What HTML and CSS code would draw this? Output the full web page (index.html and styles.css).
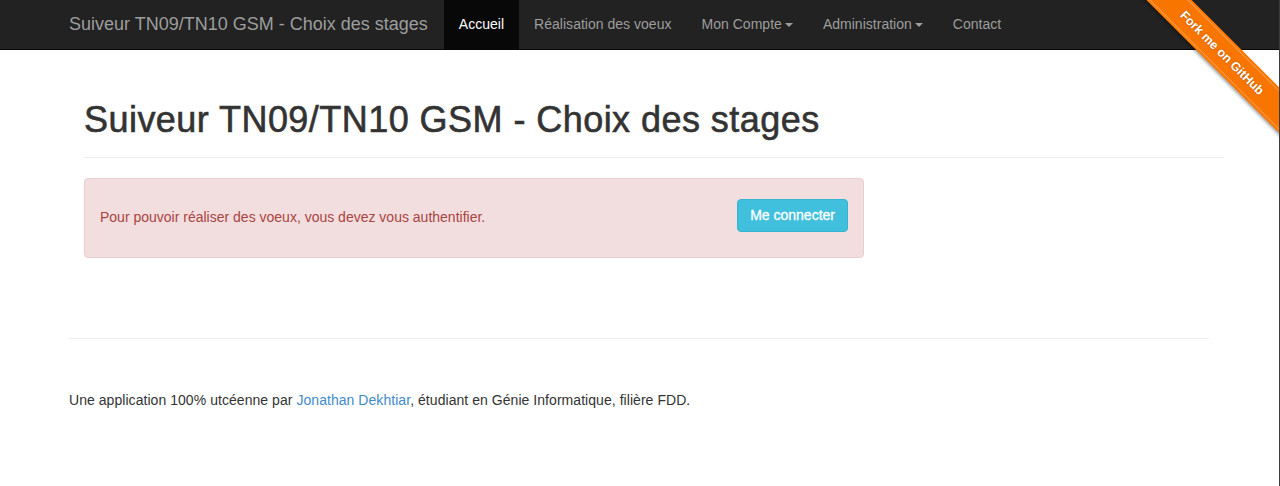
FILE: index.html
```html
<!DOCTYPE html>
<html lang="fr">
<head>
<meta charset="utf-8">
<title>Suiveur TN09/TN10 GSM - Choix des stages</title>
<link rel="stylesheet" href="styles.css">
</head>
<body>
<nav class="navbar">
  <div class="nav-inner">
    <a class="brand" href="#">Suiveur TN09/TN10 GSM - Choix des stages</a>
    <ul class="nav">
      <li class="active"><a href="#">Accueil</a></li>
      <li><a href="#">Réalisation des voeux</a></li>
      <li><a href="#">Mon Compte<span class="caret"></span></a></li>
      <li><a href="#">Administration<span class="caret"></span></a></li>
      <li><a href="#">Contact</a></li>
    </ul>
  </div>
</nav>

<div class="ribbon-wrap">
  <a class="ribbon" href="#">Fork me on GitHub</a>
</div>

<main class="main">
  <div class="page-header">
    <h1>Suiveur TN09/TN10 GSM - Choix des stages</h1>
  </div>
  <div class="alert">
    <span class="alert-text">Pour pouvoir réaliser des voeux, vous devez vous authentifier.</span>
    <a class="btn" href="#">Me connecter</a>
  </div>
</main>

<footer class="footer">
  <hr class="sep">
  <p>Une application 100% utcéenne par <a href="#">Jonathan Dekhtiar</a>, étudiant en Génie Informatique, filière FDD.</p>
</footer>
</body>
</html>
```

FILE: styles.css
```css
* { box-sizing: border-box; }
html, body { margin: 0; padding: 0; }
html {
  border-right: 1px solid #3c3c3c;
  height: 100%;
}
body {
  position: relative;
  min-height: 100%;
  font-family: "Liberation Sans", Arial, Helvetica, sans-serif;
  font-size: 14px;
  line-height: 1.428571;
  color: #333;
  background: #fff;
  overflow: hidden;
}
a { text-decoration: none; }

.navbar {
  height: 50px;
  background: #222;
  border-bottom: 1px solid #080808;
}
.nav-inner {
  display: flex;
  height: 49px;
  padding-left: 54px;
}
.brand {
  display: block;
  padding: 0 15px;
  line-height: 49px;
  font-size: 18px;
  color: #9d9d9d;
}
.nav {
  display: flex;
  list-style: none;
  margin: 0;
  padding: 0 0 0 1px;
}
.nav li a {
  display: block;
  padding: 0 15px;
  line-height: 49px;
  color: #9d9d9d;
  font-size: 14px;
  letter-spacing: 0.02px;
}
.nav li.active a {
  background: #080808;
  color: #fff;
}
.caret {
  display: inline-block;
  width: 0;
  height: 0;
  margin-left: 3px;
  vertical-align: middle;
  border-top: 4px solid #9d9d9d;
  border-left: 4px solid transparent;
  border-right: 4px solid transparent;
}

.ribbon-wrap {
  position: absolute;
  top: 0;
  right: 0;
  width: 150px;
  height: 150px;
  overflow: hidden;
}
.ribbon {
  position: absolute;
  left: -32px;
  top: 37px;
  width: 250px;
  height: 32px;
  transform: rotate(45deg);
  background: #f87600;
  color: #fff;
  font-family: "Liberation Sans", Arial, sans-serif;
  font-weight: bold;
  font-size: 12.5px;
  line-height: 33px;
  text-align: center;
  text-shadow: 0 0 2px rgba(0,0,0,0.3);
  box-shadow: 0 2px 3px rgba(0,0,0,0.35),
              inset 0 2px 0 #f87600, inset 0 3px 0 rgba(255,255,255,0.3),
              inset 0 -2px 0 #f87600, inset 0 -3px 0 rgba(255,255,255,0.3);
}

.main {
  width: 1140px;
  margin-left: 84px;
}
.page-header {
  margin-top: 50px;
  padding-bottom: 7px;
  border-bottom: 1px solid #eee;
  margin-bottom: 20px;
}
.page-header h1 {
  margin: 20px 0 10px;
  font-size: 36px;
  font-weight: 500;
  line-height: 1.1;
  letter-spacing: 0.45px;
  color: #333;
  -webkit-text-stroke: 0.6px #333;
}
.alert {
  width: 780px;
  height: 80px;
  display: flex;
  align-items: center;
  justify-content: space-between;
  padding: 0 15px;
  background: #f2dede;
  border: 1px solid #ebccd1;
  border-radius: 4px;
  color: #a94442;
  font-size: 14px;
}
.btn {
  display: inline-block;
  margin-bottom: 5px;
  padding: 6px 12px;
  font-size: 14px;
  line-height: 19px;
  color: #fff;
  background: #40c0dd;
  border: 1px solid #34b3d2;
  border-radius: 4px;
  -webkit-text-stroke: 0.3px #fff;
}

.footer {
  width: 1140px;
  margin: 0 0 0 69px;
  padding-top: 80px;
}
.sep {
  margin: 0;
  border: 0;
  border-top: 1px solid #eee;
}
.footer p {
  margin: 52px 0 0;
  letter-spacing: 0.05px;
}
.footer a { color: #428bca; }
```
